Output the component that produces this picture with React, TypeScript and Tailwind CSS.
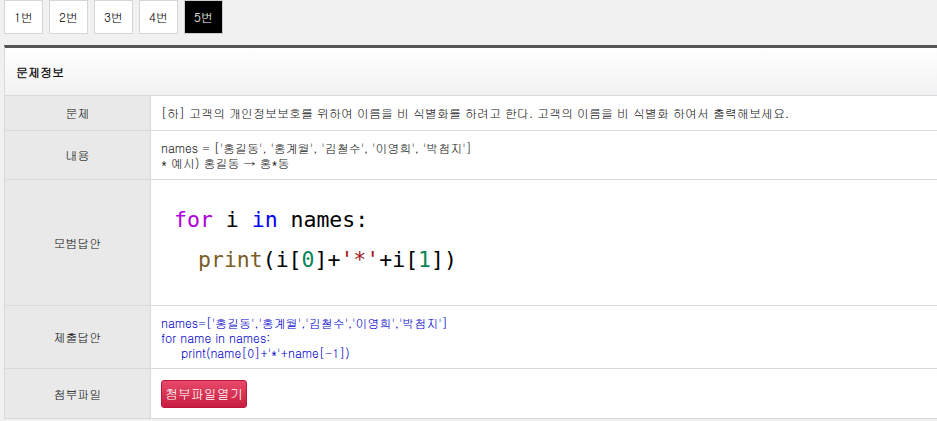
const kr = "font-['Gulim','Noto_Sans_CJK_KR',sans-serif]";

const tabs = ["1번", "2번", "3번", "4번", "5번"];

function Row({
  label,
  height,
  children,
}: {
  label: string;
  height: string;
  children: React.ReactNode;
}) {
  return (
    <div className={`grid grid-cols-[146px_1fr] border-b border-[#d9d9d9] ${height}`}>
      <div className="flex items-center justify-center bg-[#e9e9e9] border-r border-[#d9d9d9] text-[12px] text-[#111]">
        {label}
      </div>
      <div className="flex items-center pl-[10px] bg-white text-[12px] text-[#222]">{children}</div>
    </div>
  );
}

export default function App() {
  return (
    <div className={`min-h-[421px] w-[937px] overflow-hidden bg-[#f1f1f1] ${kr}`}>
      {/* tabs */}
      <div className="flex gap-[6px] pl-[4px]">
        {tabs.map((t, i) => (
          <div
            key={t}
            className={`flex h-[34px] w-[39px] items-center justify-center border text-[12px] ${
              i === 4
                ? "bg-black border-[#ccc] text-white"
                : "bg-white border-[#d6d6d6] text-black"
            }`}
          >
            {t}
          </div>
        ))}
      </div>

      {/* panel */}
      <div className="mt-[11px] ml-[4px] w-[960px] border-t-[3px] border-l border-t-[#555] border-l-[#d9d9d9]">
        <div className="flex h-[48px] items-center border-b border-[#d9d9d9] bg-gradient-to-b from-white to-[#f2f2f4] pl-[11px] text-[12px] font-bold text-[#111]">
          문제정보
        </div>

        <Row label="문제" height="h-[35px]">
          [하] 고객의 개인정보보호를 위하여 이름을 비 식별화를 하려고 한다. 고객의 이름을 비 식별화 하여서 출력해보세요.
        </Row>

        <Row label="내용" height="h-[49px]">
          <div className="leading-[15px]">
            <div>names = ['홍길동', '홍계월', '김철수', '이영희', '박첨지']</div>
            <div>* 예시) 홍길동 → 홍*동</div>
          </div>
        </Row>

        <Row label="모범답안" height="h-[126px]">
          <div className="pl-[13px] pb-[6px] font-['DejaVu_Sans_Mono',monospace] text-[21.5px] leading-[40px] text-black">
            <div>
              <span className="text-[#af00db]">for</span> i <span className="text-[#0000ff]">in</span> names:
            </div>
            <div className="pl-[24px]">
              <span className="text-[#795e26]">print</span>(i[<span className="text-[#098658]">0</span>]+
              <span className="text-[#a31515]">'*'</span>+i[<span className="text-[#098658]">1</span>])
            </div>
          </div>
        </Row>

        <Row label="제출답안" height="h-[63px]">
          <div className="text-[12px] leading-[15px] text-[#0000cc]">
            <div>names=['홍길동','홍계월','김철수','이영희','박첨지']</div>
            <div>for name in names:</div>
            <div className="pl-[20px]">print(name[0]+'*'+name[-1])</div>
          </div>
        </Row>

        <Row label="첨부파일" height="h-[50px]">
          <button className="flex h-[28px] w-[86px] items-center justify-center rounded-[3px] border border-[#b8173a] bg-gradient-to-b from-[#e8486a] to-[#c81c40] text-[13px] text-white">
            첨부파일열기
          </button>
        </Row>
      </div>
    </div>
  );
}
